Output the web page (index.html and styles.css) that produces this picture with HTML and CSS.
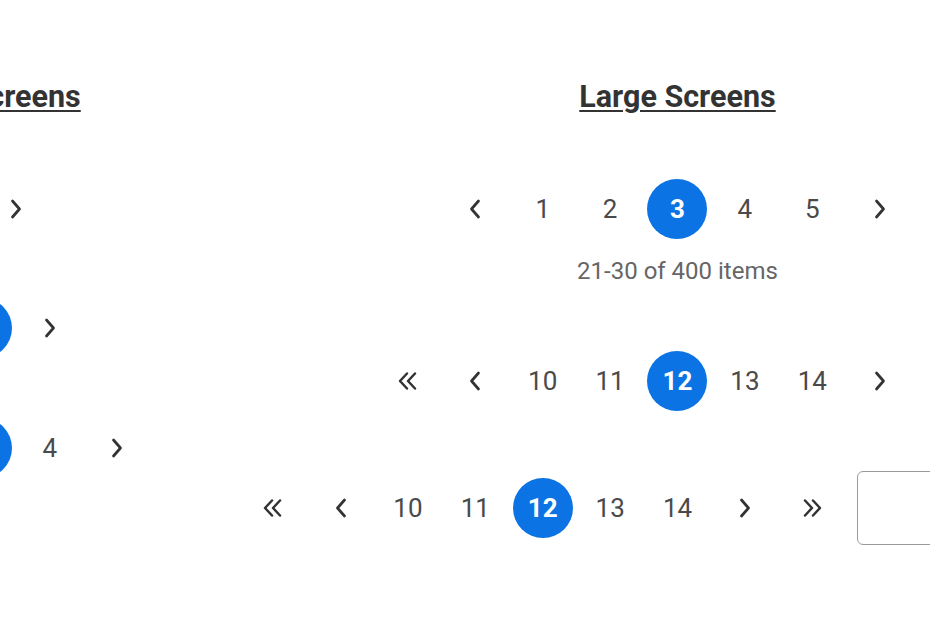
FILE: index.html
```html
<!DOCTYPE html>
<html lang="en">
<head>
<meta charset="utf-8">
<title>Pagination</title>
<link rel="stylesheet" href="styles.css">
</head>
<body>
<svg class="defs" width="0" height="0" aria-hidden="true">
  <defs>
    <symbol id="prev" viewBox="0 0 12 20"><path d="M9.5 2 L2.5 10 L9.5 18" fill="none" stroke="currentColor" stroke-width="2.7" stroke-linecap="round" stroke-linejoin="round"/></symbol>
    <symbol id="next" viewBox="0 0 12 20"><path d="M2.5 2 L9.5 10 L2.5 18" fill="none" stroke="currentColor" stroke-width="2.7" stroke-linecap="round" stroke-linejoin="round"/></symbol>
    <symbol id="first" viewBox="0 0 22 20"><path d="M10 2.5 L3 10 L10 17.5 M18 2.5 L11 10 L18 17.5" fill="none" stroke="currentColor" stroke-width="2.5" stroke-linecap="round" stroke-linejoin="round"/></symbol>
    <symbol id="last" viewBox="0 0 22 20"><path d="M4 2.5 L11 10 L4 17.5 M12 2.5 L19 10 L12 17.5" fill="none" stroke="currentColor" stroke-width="2.5" stroke-linecap="round" stroke-linejoin="round"/></symbol>
  </defs>
</svg>
<main class="page">
  <section class="col col-small">
    <h2 class="title">Small Screens</h2>
    <nav class="pager pager-1">
      <span class="item"><svg class="chev"><use href="#prev"/></svg></span>
      <span class="item"><svg class="chev"><use href="#next"/></svg></span>
    </nav>
    <nav class="pager pager-s2">
      <span class="item"><svg class="chev"><use href="#prev"/></svg></span>
      <span class="item"><span class="current">3</span></span>
      <span class="item"><svg class="chev"><use href="#next"/></svg></span>
    </nav>
    <nav class="pager pager-s3">
      <span class="item"><svg class="chev"><use href="#prev"/></svg></span>
      <span class="item">2</span>
      <span class="item"><span class="current">3</span></span>
      <span class="item">4</span>
      <span class="item"><svg class="chev"><use href="#next"/></svg></span>
    </nav>
  </section>
  <section class="col col-large">
    <h2 class="title">Large Screens</h2>
    <nav class="pager pager-1">
      <span class="item"><svg class="chev"><use href="#prev"/></svg></span>
      <span class="item">1</span>
      <span class="item">2</span>
      <span class="item"><span class="current">3</span></span>
      <span class="item">4</span>
      <span class="item">5</span>
      <span class="item"><svg class="chev"><use href="#next"/></svg></span>
    </nav>
    <p class="count">21-30 of 400 items</p>
    <nav class="pager pager-l2">
      <span class="item"><svg class="dchev"><use href="#first"/></svg></span>
      <span class="item"><svg class="chev"><use href="#prev"/></svg></span>
      <span class="item">10</span>
      <span class="item">11</span>
      <span class="item"><span class="current">12</span></span>
      <span class="item">13</span>
      <span class="item">14</span>
      <span class="item"><svg class="chev"><use href="#next"/></svg></span>
      <span class="item"><svg class="dchev"><use href="#last"/></svg></span>
    </nav>
    <nav class="pager pager-l3">
      <span class="item"><svg class="dchev"><use href="#first"/></svg></span>
      <span class="item"><svg class="chev"><use href="#prev"/></svg></span>
      <span class="item">10</span>
      <span class="item">11</span>
      <span class="item"><span class="current">12</span></span>
      <span class="item">13</span>
      <span class="item">14</span>
      <span class="item"><svg class="chev"><use href="#next"/></svg></span>
      <span class="item"><svg class="dchev"><use href="#last"/></svg></span>
      <input class="goto" type="text" aria-label="Go to page">
    </nav>
  </section>
</main>
</body>
</html>
```

FILE: styles.css
```css
html, body {
  margin: 0;
  padding: 0;
  background: #ffffff;
  overflow: hidden;
  width: 930px;
  height: 620px;
}

body {
  font-family: Roboto, "Liberation Sans", sans-serif;
  color: #444444;
}

.defs {
  position: absolute;
  width: 0;
  height: 0;
}

.page {
  display: grid;
  grid-template-columns: 695px 695px;
  margin-left: -365px;
  width: 1390px;
}

.col {
  display: flex;
  flex-direction: column;
  align-items: center;
  padding-top: 79px;
  min-width: 0;
}

.title {
  margin: 0;
  font-size: 30.5px;
  line-height: 36px;
  font-weight: 700;
  color: #333333;
  text-decoration: underline;
  text-decoration-thickness: 2px;
  text-underline-offset: 3px;
  white-space: nowrap;
}

.pager {
  display: flex;
  justify-content: center;
  align-items: center;
  width: 100%;
  height: 60px;
}

.item {
  flex: 0 0 67.4px;
  display: flex;
  justify-content: center;
  align-items: center;
  height: 60px;
  font-size: 26px;
  color: #4a4a4a;
}

.current {
  display: flex;
  justify-content: center;
  align-items: center;
  width: 60px;
  height: 60px;
  border-radius: 50%;
  background: #0b73e3;
  color: #ffffff;
  font-weight: 700;
}

.chev {
  width: 12px;
  height: 20px;
  color: #333333;
}

.dchev {
  width: 22px;
  height: 20px;
  color: #333333;
}

.pager-1 {
  margin-top: 64px;
}

.count {
  margin: 17px 0 0;
  font-size: 24px;
  line-height: 30px;
  color: #666666;
}

.pager-l2 {
  margin-top: 65px;
}

.pager-l3 {
  margin-top: 67px;
}

.pager-s2 {
  margin-top: 59px;
}

.pager-s3 {
  margin-top: 60px;
}

.goto {
  flex: 0 0 259px;
  box-sizing: border-box;
  height: 74px;
  margin: 0 0 0 10.5px;
  border: 1.5px solid #9a9a9a;
  border-radius: 6px;
  background: #ffffff;
  padding: 0 12px;
  font: inherit;
}
```
